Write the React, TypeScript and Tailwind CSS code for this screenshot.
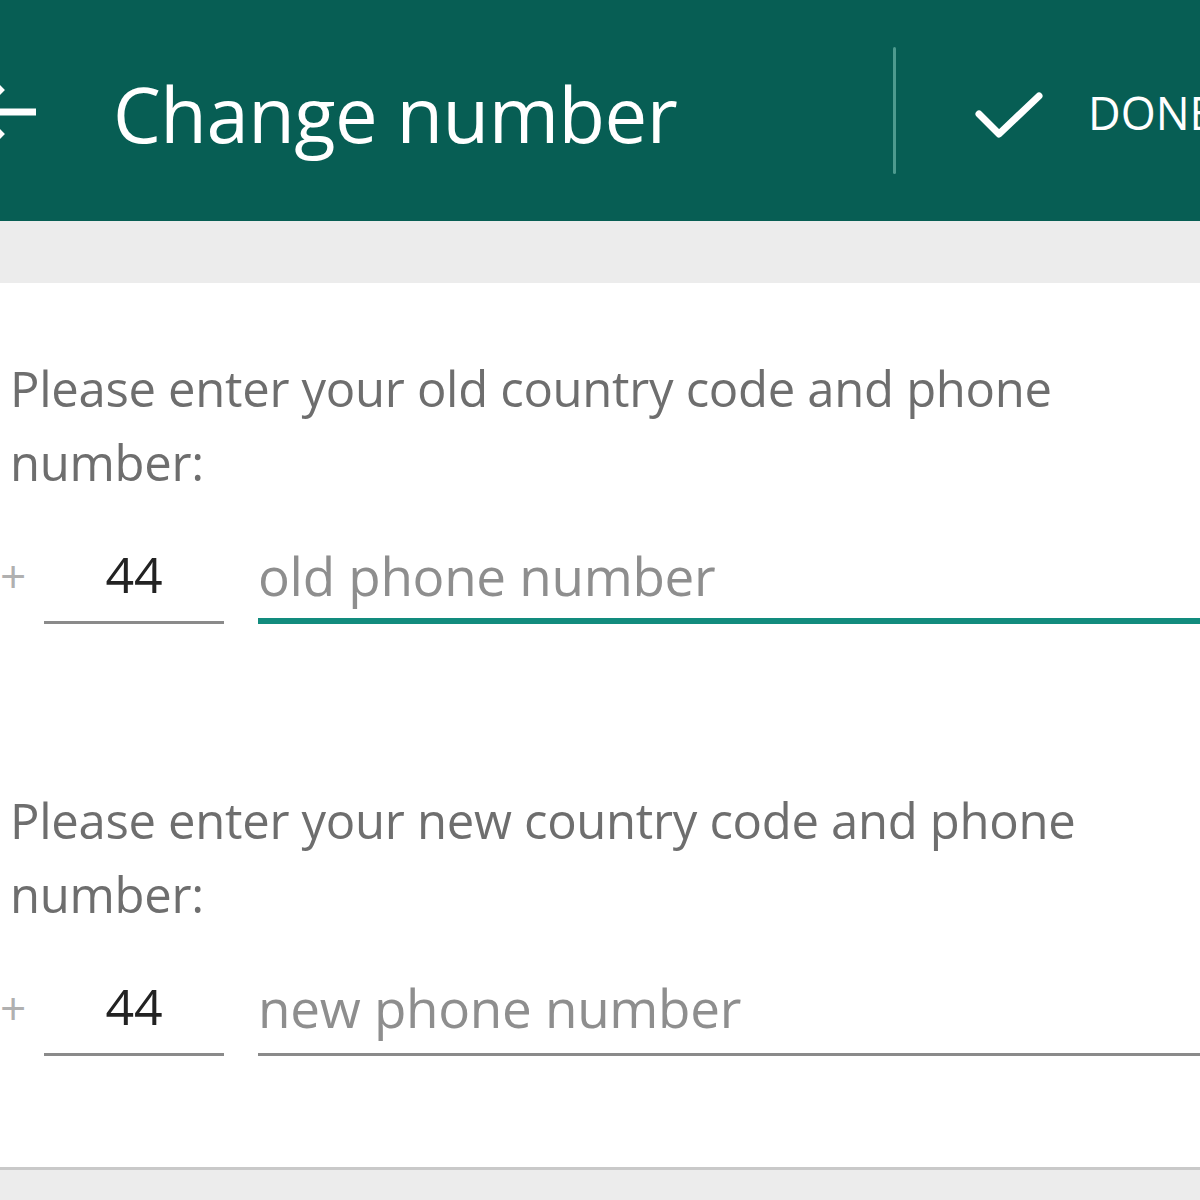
import React from "react";

export default function App() {
  return (
    <div className="w-[1200px] h-[1200px] overflow-hidden bg-[#ececec] flex flex-col" style={{ fontFamily: '"Open Sans", "Noto Sans", sans-serif' }}>
      <div className="h-[221px] bg-[#075e54] flex items-center relative shrink-0">
        <svg className="absolute left-[-30px] top-[82px]" width="66" height="60" viewBox="0 0 66 60">
          <path d="M64 30 H8 M30 8 L8 30 L30 52" stroke="#ffffff" strokeWidth="7" fill="none" strokeLinecap="square" />
        </svg>
        <div className="flex-1 min-w-0 pl-[113px] text-white text-[76px] leading-none tracking-[-0.5px] mt-[6px] whitespace-nowrap">Change number</div>
        <div className="w-[307px] shrink-0 flex items-center">
          <div className="w-[3px] h-[127px] bg-[#4e9b8f] mr-[79px] rounded-full shrink-0" />
          <svg width="70" height="56" viewBox="0 0 70 56" className="mr-[43px] mt-[6px] shrink-0">
            <path d="M4 28 L24 48 L64 10" stroke="#ffffff" strokeWidth="7" fill="none" strokeLinecap="round" strokeLinejoin="round" />
          </svg>
          <div className="text-white text-[45px] leading-none whitespace-nowrap mt-[4px] shrink-0">DONE</div>
        </div>
      </div>
      <div className="h-[62px] shrink-0" />
      <div className="bg-white h-[887px] shrink-0 border-b-[3px] border-[#c9c9c9] pt-[68px]">
        <Section label="Please enter your old country code and phone" placeholder="old phone number" active />
        <div className="h-[159px]" />
        <Section label="Please enter your new country code and phone" placeholder="new phone number" />
      </div>
    </div>
  );
}

function Section({ label, placeholder, active }: { label: string; placeholder: string; active?: boolean }) {
  return (
    <div>
      <div className="pl-[10px] text-[#6e6e6e] text-[49px] leading-[74px] tracking-[-0.3px]">
        {label}
        <br />
        number:
      </div>
      <div className="flex items-end mt-[37px] h-[88px]">
        <div className="w-[38px] text-[#b0b0b0] text-[46px] leading-none pb-[26px] pl-[0px] ml-[0px] mr-[6px]">+</div>
        <div className="w-[180px] border-b-[3px] border-[#8a8a8a] text-center text-[#222222] text-[50px] leading-none pb-[22px]">44</div>
        <div className={"ml-[34px] flex-1 text-[#8e8e8e] text-[53px] leading-none tracking-[-0.3px] " + (active ? "pb-[16px] border-b-[6px] border-[#128c7e]" : "pb-[19px] border-b-[3px] border-[#8a8a8a]")}>
          {placeholder}
        </div>
      </div>
    </div>
  );
}
